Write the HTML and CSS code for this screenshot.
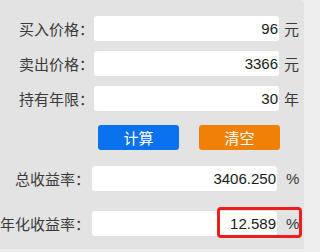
FILE: index.html
```html
<!DOCTYPE html>
<html lang="zh-CN">
<head>
<meta charset="utf-8">
<title>收益率计算</title>
<link rel="stylesheet" href="styles.css">
</head>
<body>
<div class="panel">
  <div class="row">
    <span class="label">买入价格<span class="colon">：</span></span>
    <span class="field">96</span>
    <span class="unit">元</span>
  </div>
  <div class="row">
    <span class="label">卖出价格<span class="colon">：</span></span>
    <span class="field">3366</span>
    <span class="unit">元</span>
  </div>
  <div class="row">
    <span class="label">持有年限<span class="colon">：</span></span>
    <span class="field">30</span>
    <span class="unit">年</span>
  </div>
  <div class="actions">
    <button class="btn btn-calc">计算</button>
    <button class="btn btn-clear">清空</button>
  </div>
  <div class="row result first">
    <span class="label">总收益率<span class="colon">：</span></span>
    <span class="field">3406.250</span>
    <span class="unit pct">%</span>
  </div>
  <div class="row result second">
    <span class="label">年化收益率<span class="colon">：</span></span>
    <span class="field">12.589</span>
    <span class="unit pct">%</span>
    <span class="highlight"></span>
  </div>
</div>
</body>
</html>
```
FILE: styles.css
```css
html, body {
  margin: 0;
  padding: 0;
  background: #eeeeee;
}
.panel {
  width: 304px;
  height: 249px;
  box-sizing: border-box;
  padding-top: 16px;
  background: #e3e3e3;
  border-radius: 0 4px 0 0;
  font-family: "Noto Sans CJK SC", sans-serif;
}
.row {
  display: flex;
  align-items: center;
  height: 25px;
  margin-bottom: 10px;
  position: relative;
}
.label {
  width: 94px;
  flex: none;
  text-align: right;
  font-size: 15px;
  color: #3a3a3a;
  white-space: nowrap;
}
.colon {
  font-family: "Noto Sans CJK TC", sans-serif;
}
.field {
  width: 185px;
  height: 25px;
  flex: none;
  box-sizing: border-box;
  padding-right: 1px;
  background: #ffffff;
  border-radius: 3px;
  text-align: right;
  font-family: "Liberation Sans", Arial, sans-serif;
  font-size: 15px;
  line-height: 25px;
  color: #1a1a1a;
}
.unit {
  margin-left: 5px;
  font-size: 15px;
  color: #3a3a3a;
}
.actions {
  display: flex;
  gap: 20px;
  padding-left: 98px;
  margin-top: 14px;
}
.btn {
  width: 81px;
  height: 25px;
  border: none;
  border-radius: 3px;
  color: #ffffff;
  font-family: "Noto Sans CJK SC", sans-serif;
  font-size: 15px;
  padding: 0;
}
.btn-calc { background: #0a72ee; }
.btn-clear { background: #f08008; }
.result .label { width: 90px; }
.result .field { margin-left: 2px; }
.result .pct {
  margin-left: 9px;
  font-family: "Liberation Sans", Arial, sans-serif;
}
.result.first { margin-top: 16px; margin-bottom: 20px; }
.highlight {
  position: absolute;
  left: 217px;
  top: -4px;
  width: 85px;
  height: 31px;
  box-sizing: border-box;
  border: 3px solid #ee1c1c;
  border-radius: 4px;
}
```
